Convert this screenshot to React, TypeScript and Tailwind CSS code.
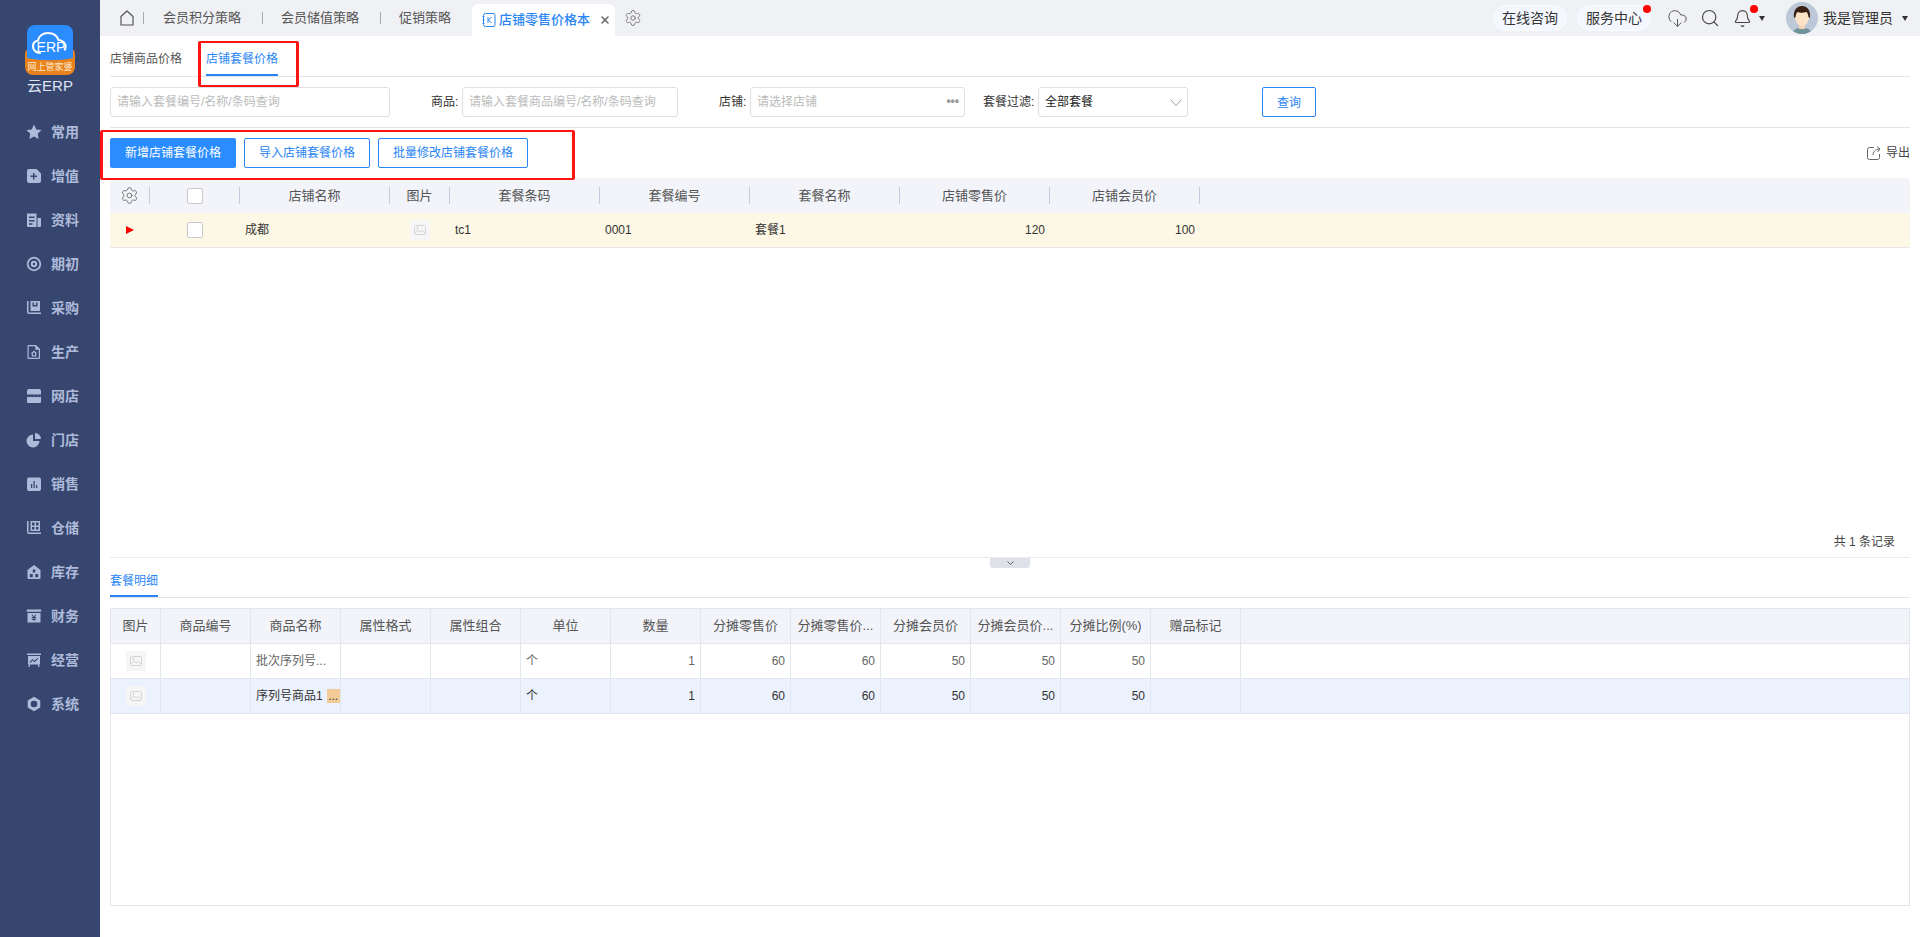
import { Bell, CloudDownload, Search, Settings, X } from 'lucide-react';
import type { ReactNode } from 'react';

// Left menu icons, all drawn on a 16x16 box
const menuItems: { label: string; icon: ReactNode }[] = [
  { label: '常用', icon: <path d="M8 .5l2.300 4.900 5.200.7-3.800 3.600 1 5.300L8 12.400l-4.700 2.600 1-5.300L.5 6.100l5.200-.7z" /> },
  { label: '增值', icon: <path fillRule="evenodd" d="M3 1h7.500L15 5.500V13a2 2 0 0 1-2 2H3a2 2 0 0 1-2-2V3a2 2 0 0 1 2-2zm4 4v2.500H4.500v1.500H7v2.500h1.500V9H11V7.500H8.500V5z" /> },
  { label: '资料', icon: <path fillRule="evenodd" d="M1 1.500h9.500V15H2a1 1 0 0 1-1-1zM3 4.500v1.500h5.500V4.500zm0 3.500v1.500h5.500V8zm0 3.200v1.500h3.500v-1.500zM11.500 6H15v8a1 1 0 0 1-1 1h-2.500z" /> },
  { label: '期初', icon: <path fillRule="evenodd" d="M8 .8a7.200 7.200 0 1 1 0 14.400A7.200 7.200 0 0 1 8 .8zm0 1.800a5.400 5.400 0 1 0 0 10.800A5.400 5.400 0 0 0 8 2.600zm0 2.200a3.200 3.200 0 1 1 0 6.400 3.200 3.200 0 0 1 0-6.400zm0 2a1.200 1.200 0 1 0 0 2.400 1.200 1.200 0 0 0 0-2.400z" /> },
  { label: '采购', icon: <path fillRule="evenodd" d="M1 1h1.500v11.500H15V14H3a2 2 0 0 1-2-2zm3.500 0H14v10H4.500zM6.500 2.500v4h5v-4H10v2.500H8V2.500z" /> },
  { label: '生产', icon: <path fillRule="evenodd" d="M2.500 1H10l4 4v9a1 1 0 0 1-1 1H2.500a1 1 0 0 1-1-1V2a1 1 0 0 1 1-1zm.200 1.200v11.600h10.100V5.800H9.300V2.200zM8 6.500l3.300 3h-1v3H5.700v-3h-1zm0 1.700L6.900 9.200v2.100h2.200V9.200z" /> },
  { label: '网店', icon: <path fillRule="evenodd" d="M3 1h10a2 2 0 0 1 2 2v3.500H1V3a2 2 0 0 1 2-2zM1 8.500c1.200 1 2.400 1 3.500 0 1.100 1 2.400 1 3.500 0 1.100 1 2.400 1 3.500 0 1.100 1 2.300 1 3.500 0V14a1 1 0 0 1-1 1H2a1 1 0 0 1-1-1z" /> },
  { label: '门店', icon: <path d="M7 2.500V9h6.500A6.500 6.500 0 1 1 7 2.500zM9 1a6 6 0 0 1 6 6H9z" /> },
  { label: '销售', icon: <path fillRule="evenodd" d="M3 1.500h10a2 2 0 0 1 2 2V13a2 2 0 0 1-2 2H3a2 2 0 0 1-2-2V3.500a2 2 0 0 1 2-2zM5 8v4h1.200V8zm2.500-3v7h1.200V5zM10 9v3h1.200V9z" /> },
  { label: '仓储', icon: <path fillRule="evenodd" d="M1 1h1.500v11.500H15V14H3a2 2 0 0 1-2-2zm3.500 0H14v10H4.500zM6 2.500v3h2.500v-3zm0 4.500v2.500h2.500V7zm4-4.500v3h2.500v-3zM10 7v2.500h2.500V7z" /> },
  { label: '库存', icon: <path fillRule="evenodd" d="M8 1l6.500 5v8a1 1 0 0 1-1 1h-11a1 1 0 0 1-1-1V6zM6.700 5.500v3h2.600v-3zM3.800 10v3.200h2.900V10zm5.500 0v3.200h2.900V10z" /> },
  { label: '财务', icon: <path fillRule="evenodd" d="M.8 1.500h14.400v2.300H.8zM1.500 5h13v9.500h-13zm4 1.800L7.300 9H5.800v1h1.700v.7H5.800v1h1.700V13h1v-1.300h1.700v-1H8.500V10h1.700V9H8.700l1.800-2.200H9.300L8 8.400 6.700 6.800z" /> },
  { label: '经营', icon: <path fillRule="evenodd" d="M1 1.500h14V3H1zM2 4h12v8.500h-1l.8 2.500h-1.300l-.8-2.500H4.300L3.500 15H2.200l.8-2.500H2zm1.500 6.200l.8.800L6.500 8.500l2 1.800 3.700-3.600-.8-.8-2.900 2.900-2-1.800z" /> },
  { label: '系统', icon: <path fillRule="evenodd" d="M8 .8l6.300 3.600v7.200L8 15.200l-6.300-3.600V4.400zm0 3.900a3.300 3.300 0 1 0 0 6.600 3.300 3.300 0 0 0 0-6.600z" /> },
];

const tableColumns = [
  { label: '店铺名称', width: 'w-[150px]' },
  { label: '图片', width: 'w-[60px]' },
  { label: '套餐条码', width: 'w-[150px]' },
  { label: '套餐编号', width: 'w-[150px]' },
  { label: '套餐名称', width: 'w-[150px]' },
  { label: '店铺零售价', width: 'w-[150px]' },
  { label: '店铺会员价', width: 'w-[150px]' },
];

const detailColumns = ['商品编号', '商品名称', '属性格式', '属性组合', '单位', '数量', '分摊零售价', '分摊零售价...', '分摊会员价', '分摊会员价...', '分摊比例(%)', '赠品标记'];

function ImagePlaceholder() {
  return (
    <div className="flex h-[20px] w-[20px] items-center justify-center bg-[#f6f6f6]">
      <svg viewBox="0 0 12 12" className="h-[12px] w-[12px] text-[#d4d4d4]" fill="none" stroke="currentColor">
        <rect x="0.5" y="1.500" width="11" height="9" rx="1" />
        <path d="M1 9l3-3 2 2 2-1.500L11 9" />
        <circle cx="3.500" cy="4" r="0.700" />
      </svg>
    </div>
  );
}

function Logo() {
  return (
    <svg viewBox="0 0 50 50" className="h-[50px] w-[50px]">
      <path d="M1 25h48l1 4v13a8 8 0 0 1-8 8H8a8 8 0 0 1-8-8V29z" fill="#e8821c" />
      <path d="M10 0h30a8 8 0 0 1 8 8v25c-14 3-32 3-46 0V8a8 8 0 0 1 8-8z" fill="#2a8cff" />
      <path d="M15 28c-4 0-7-3-7-6.500 0-3.500 2.500-5.500 5-6 1-4.500 5-7.500 10-7.500 5 0 9 2.500 10.500 7 4 .2 7 3 7 6.500 0 1-.2 2-.7 3" fill="none" stroke="#fff" strokeWidth="2.200" strokeLinecap="round" />
      <text x="26" y="27" textAnchor="middle" fontSize="14" fill="#fff">ERP</text>
      <text x="25" y="45" textAnchor="middle" fontSize="9" fill="#ffe9cf">网上管家婆</text>
    </svg>
  );
}

function Sidebar() {
  return (
    <aside className="flex h-[937px] w-[100px] shrink-0 flex-col bg-[#36466f]">
      <div className="flex h-[110px] flex-col items-center pt-[25px]">
        <Logo />
        <div className="mt-[2px] text-[15px] leading-[18px] text-[#dfe4f2]">云ERP</div>
      </div>
      {menuItems.map((item) => (
        <div key={item.label} className="flex h-[44px] items-center pl-[26px] text-[#aebad9]">
          <svg viewBox="0 0 16 16" fill="currentColor" className="h-[16px] w-[16px] shrink-0">
            {item.icon}
          </svg>
          <span className="ml-[9px] text-[14px] font-bold leading-[20px]">{item.label}</span>
        </div>
      ))}
    </aside>
  );
}

function TopBar() {
  return (
    <header className="flex h-[36px] shrink-0 items-center bg-[#f0f1f5] text-[13px] text-[#555]">
      <svg viewBox="0 0 14 16" className="ml-[20px] h-[16px] w-[14px] text-[#555]" fill="none" stroke="currentColor" strokeWidth="1.200" strokeLinejoin="round">
        <path d="M1 6.500L7 1l6 5.500V15H1z" />
      </svg>
      <span className="ml-[9px] h-[12px] w-px bg-[#aaa]" />
      <span className="ml-[19px] w-[78px]">会员积分策略</span>
      <span className="ml-[21px] h-[12px] w-px bg-[#aaa]" />
      <span className="ml-[18px] w-[78px]">会员储值策略</span>
      <span className="ml-[21px] h-[12px] w-px bg-[#aaa]" />
      <span className="ml-[18px] w-[52px]">促销策略</span>
      <div className="ml-[21px] flex h-[32px] w-[143px] items-center self-end rounded-t-[6px] bg-white pl-[10px] text-[#2a85f5]">
        <svg viewBox="0 0 14 14" className="h-[14px] w-[14px]" fill="none" stroke="currentColor">
          <rect x="1.500" y="0.500" width="11.500" height="13" rx="2" />
          <path d="M0.500 3.500h2M0.500 7h2M0.500 10.500h2M6 4v6M9.500 4L6.500 7l3 3" />
        </svg>
        <span className="ml-[3px] w-[91px] font-medium">店铺零售价格本</span>
        <X className="ml-[9px] h-[12px] w-[12px] text-[#666]" strokeWidth={3} />
      </div>
      <Settings className="ml-[9px] h-[18px] w-[18px] text-[#666]" strokeWidth={1.100} />

      <div className="ml-auto flex items-center pr-[12px] text-[14px] text-[#333]">
        <span className="flex h-[26px] w-[74px] items-center justify-center rounded-full border border-[#fbfcff] bg-[#f4f7fe]">在线咨询</span>
        <span className="relative ml-[10px] flex h-[26px] w-[74px] items-center justify-center rounded-full border border-[#fbfcff] bg-[#f4f7fe]">
          服务中心
          <i className="absolute right-[-1px] top-[-1px] h-[8px] w-[8px] rounded-full bg-[#ff0000]" />
        </span>
        <CloudDownload className="ml-[16px] h-[21px] w-[21px] text-[#555]" strokeWidth={1.100} />
        <Search className="ml-[12px] h-[20px] w-[20px] text-[#444]" strokeWidth={1.400} />
        <span className="relative ml-[13px] flex">
          <Bell className="h-[19px] w-[19px] text-[#444]" strokeWidth={1.400} />
          <i className="absolute right-[-6px] top-[-4px] h-[8px] w-[8px] rounded-full bg-[#ff0000]" />
        </span>
        <i className="ml-[7px] h-0 w-0 border-x-[3.500px] border-t-[5px] border-x-transparent border-t-[#333]" />
        <svg viewBox="0 0 32 32" className="ml-[21px] h-[32px] w-[32px] rounded-full">
          <rect width="32" height="32" fill="#bcc8d8" />
          <path d="M6 32c1-5 5-6 10-6s9 1 10 6z" fill="#6f9299" />
          <rect x="13" y="21" width="6" height="6" fill="#f2d3b5" />
          <ellipse cx="16" cy="15" rx="7" ry="9" fill="#fde3c6" />
          <path d="M8 16c-1-8 3-12 8-12s9 4 8 12l-1.500-1c-.5-3-1-4-2-5-3 1-7 1-9 0-1 1-1.500 2-2 5z" fill="#3a2013" />
        </svg>
        <span className="ml-[5px] w-[70px]">我是管理员</span>
        <i className="ml-[9px] h-0 w-0 border-x-[3.500px] border-t-[5px] border-x-transparent border-t-[#333]" />
      </div>
    </header>
  );
}

function FilterInput({ placeholder, width }: { placeholder: string; width: string }) {
  return (
    <input
      type="text"
      placeholder={placeholder}
      className={`${width} h-[30px] rounded-[3px] border border-[#dfdfdf] bg-white px-[6px] text-[12px] outline-none placeholder:text-[#bbb]`}
    />
  );
}

function SubTabs() {
  return (
    <div className="relative flex h-[41px] shrink-0 items-end gap-[24px] border-b border-[#e3e4e8] text-[12px] leading-[18px]">
      <span className="pb-[8px] text-[#555]">店铺商品价格</span>
      <span className="border-b-2 border-[#2a85f5] pb-[6px] text-[#2a85f5]">店铺套餐价格</span>
      {/* red annotation */}
      <div className="absolute left-[88px] top-[5px] h-[46px] w-[101px] rounded-[2px] border-x-[3px] border-y-2 border-[#ff1414]" />
    </div>
  );
}

function FilterRow() {
  return (
    <div className="flex h-[51px] shrink-0 items-start border-b border-[#e3e4ee] pt-[10px] text-[12px] leading-[30px] text-[#333]">
      <FilterInput placeholder="请输入套餐编号/名称/条码查询" width="w-[280px]" />
      <span className="ml-[41px] w-[31px]">商品:</span>
      <FilterInput placeholder="请输入套餐商品编号/名称/条码查询" width="w-[216px]" />
      <span className="ml-[41px] w-[31px]">店铺:</span>
      <div className="relative">
        <FilterInput placeholder="请选择店铺" width="w-[215px]" />
        <span className="absolute right-[6px] top-[-1px] text-[12px] font-bold text-[#999]">•••</span>
      </div>
      <span className="ml-[18px] w-[55px]">套餐过滤:</span>
      <div className="flex h-[30px] w-[150px] items-center justify-between rounded-[3px] border border-[#dfdfdf] pl-[6px] pr-[5px] text-[#222]">
        <span>全部套餐</span>
        <svg viewBox="0 0 12 7" className="h-[7px] w-[12px] text-[#999]" fill="none" stroke="currentColor">
          <path d="M.5 .5L6 6.500 11.500 .5" />
        </svg>
      </div>
      <button className="ml-[74px] h-[30px] w-[54px] rounded-[2px] border border-[#2a85f5] text-[12px] text-[#2a85f5]">查询</button>
    </div>
  );
}

function Toolbar() {
  return (
    <div className="relative flex h-[50px] shrink-0 items-center text-[12px]">
      <button className="h-[30px] w-[126px] rounded-[2px] bg-[#2a8cff] text-white">新增店铺套餐价格</button>
      <button className="ml-[8px] h-[30px] w-[126px] rounded-[2px] border border-[#2a85f5] text-[#2a85f5]">导入店铺套餐价格</button>
      <button className="ml-[8px] h-[30px] w-[150px] rounded-[2px] border border-[#2a85f5] text-[#2a85f5]">批量修改店铺套餐价格</button>
      <div className="ml-auto flex items-center text-[#444]">
        <svg viewBox="0 0 14 14" className="h-[14px] w-[14px] text-[#666]" fill="none" stroke="currentColor">
          <path d="M7 1.500H2.500a2 2 0 0 0-2 2v8a2 2 0 0 0 2 2h8a2 2 0 0 0 2-2V8" />
          <path d="M6 9c0-3 2-5.500 6.500-6M10 .5l3 2.500-2.500 3" />
        </svg>
        <span className="ml-[5px]">导出</span>
      </div>
      {/* red annotation */}
      <div className="absolute left-[-10px] top-[2px] h-[50px] w-[475px] rounded-[2px] border-x-[3px] border-y-2 border-[#ff1414]" />
    </div>
  );
}

function HeaderCell({ width, children }: { width: string; children?: ReactNode }) {
  return (
    <div className={`${width} flex items-center`}>
      <div className="flex flex-1 items-center justify-center">{children}</div>
      <span className="h-[17px] w-px shrink-0 bg-[#c8cbe0]" />
    </div>
  );
}

function Checkbox() {
  return <span className="block h-[16px] w-[16px] rounded-[2px] border border-[#c9c9c9] bg-white" />;
}

function MainTable() {
  return (
    <div className="flex h-[379px] shrink-0 flex-col text-[12px]">
      <div className="flex h-[35px] shrink-0 rounded-t-[3px] bg-[#f2f4fa] text-[13px] text-[#555]">
        <HeaderCell width="w-[40px]">
          <Settings className="h-[19px] w-[19px] text-[#666]" strokeWidth={1.100} />
        </HeaderCell>
        <HeaderCell width="w-[90px]">
          <Checkbox />
        </HeaderCell>
        {tableColumns.map((col) => (
          <HeaderCell key={col.label} width={col.width}>
            {col.label}
          </HeaderCell>
        ))}
      </div>
      <div className="flex h-[35px] shrink-0 items-center border-b border-[#e6e7ea] bg-[#fdf7e6] text-[#333]">
        <div className="flex w-[40px] justify-center">
          <i className="h-0 w-0 border-y-[4px] border-l-[8px] border-y-transparent border-l-[#ff0000]" />
        </div>
        <div className="flex w-[90px] justify-center">
          <Checkbox />
        </div>
        <div className="w-[150px] pl-[5px]">成都</div>
        <div className="flex w-[60px] justify-center">
          <ImagePlaceholder />
        </div>
        <div className="w-[150px] pl-[5px]">tc1</div>
        <div className="w-[150px] pl-[5px]">0001</div>
        <div className="w-[150px] pl-[5px]">套餐1</div>
        <div className="w-[150px] pr-[5px] text-right">120</div>
        <div className="w-[150px] pr-[5px] text-right">100</div>
      </div>
      <div className="flex-1" />
      <div className="h-[24px] pr-[15px] text-right leading-[18px] text-[#444]">共 1 条记录</div>
    </div>
  );
}

function DetailRow({ name, selected }: { name: ReactNode; selected?: boolean }) {
  const values = ['', name, '', '', '个', '1', '60', '60', '50', '50', '50', ''];
  return (
    <div className={`flex h-[35px] border-b border-[#e4e6ef] text-[12px] ${selected ? 'bg-[#ebf1fd] text-[#333]' : 'text-[#666]'}`}>
      <div className="flex w-[50px] items-center justify-center border-r border-[#e4e6ef]">
        <ImagePlaceholder />
      </div>
      {values.map((value, i) => (
        <div
          key={i}
          className={`flex w-[90px] items-center border-r border-[#e4e6ef] ${i > 4 && i < 11 ? 'justify-end pr-[5px]' : 'pl-[5px]'}`}
        >
          {value}
        </div>
      ))}
    </div>
  );
}

function DetailPanel() {
  return (
    <div className="relative border-t border-[#e9eaee]">
      {/* collapse handle */}
      <div className="absolute left-1/2 top-0 ml-[-20px] flex h-[10px] w-[40px] items-center justify-center rounded-b-[3px] bg-[#dfe1e9]">
        <svg viewBox="0 0 7 4" className="h-[4px] w-[7px] text-[#666]" fill="none" stroke="currentColor">
          <path d="M.5 .5l3 3 3-3" />
        </svg>
      </div>
      <div className="flex h-[40px] items-end border-b border-[#e3e4ee] text-[12px] leading-[18px]">
        <span className="border-b-2 border-[#2a85f5] pb-[5px] text-[#2a85f5]">套餐明细</span>
      </div>
      <div className="mt-[10px] h-[298px] border border-[#e4e6ef]">
        <div className="flex h-[35px] border-b border-[#e4e6ef] bg-[#f2f4fa] text-[13px] text-[#555]">
          <div className="flex w-[50px] items-center justify-center border-r border-[#e4e6ef]">图片</div>
          {detailColumns.map((col, i) => (
            <div key={i} className="flex w-[90px] items-center justify-center whitespace-nowrap border-r border-[#e4e6ef]">
              {col}
            </div>
          ))}
        </div>
        <DetailRow name="批次序列号..." />
        <DetailRow
          selected
          name={
            <span className="flex items-center">
              序列号商品1
              <span className="ml-[4px] flex h-[14px] w-[13px] items-center justify-center bg-[#f3cb97] leading-[10px]">...</span>
            </span>
          }
        />
      </div>
    </div>
  );
}

export default function App() {
  return (
    <div className="flex h-[937px] w-[1920px] overflow-hidden bg-white [font-family:'Liberation_Sans','Noto_Sans_CJK_SC',sans-serif]">
      <Sidebar />
      <main className="flex min-w-0 flex-1 flex-col">
        <TopBar />
        <div className="flex flex-1 flex-col px-[10px]">
          <SubTabs />
          <FilterRow />
          <Toolbar />
          <MainTable />
          <DetailPanel />
        </div>
      </main>
    </div>
  );
}
